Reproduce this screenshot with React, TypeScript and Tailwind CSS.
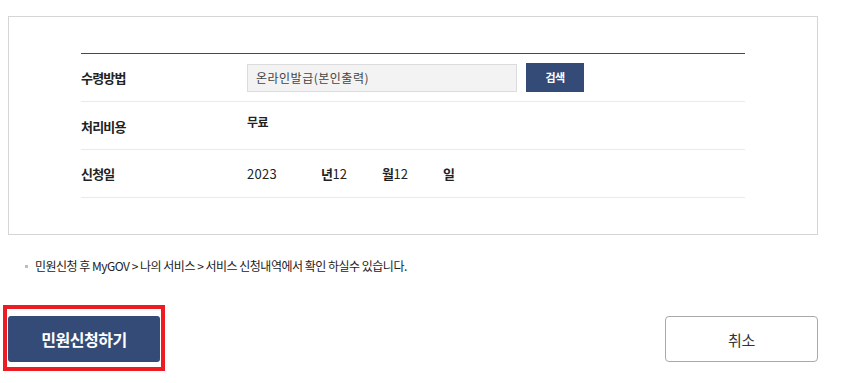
import React from "react";

const App = () => {
    return (
        <div className="relative w-[842px] h-[383px] bg-white text-[#222] font-['Noto_Sans_CJK_KR','Noto_Sans',sans-serif] pt-[16px]">
            {/* 신청 정보 박스 */}
            <div className="ml-[8px] w-[810px] h-[219px] border border-[#d5d5d5] pt-[36px] px-[72px]">
                <div className="w-[664px] border-t border-[#344b78]">
                    <div className="flex items-center h-[48px] border-b border-[#eaeaea]">
                        <div className="w-[166px] text-[13px] font-bold tracking-[-0.8px] leading-none">수령방법</div>
                        <div className="w-[270px] h-[28px] bg-[#f3f3f3] border border-[#dcdcdc] flex items-center pl-[8px] text-[12px] tracking-[0.5px] text-[#444] leading-none">
                            온라인발급(본인출력)
                        </div>
                        <button className="ml-[9px] w-[58px] h-[29px] bg-[#344b78] text-white text-[11px] font-bold tracking-[-0.6px] leading-none">
                            검색
                        </button>
                    </div>
                    <div className="flex items-center h-[48px] border-b border-[#eaeaea]">
                        <div className="w-[166px] text-[13px] font-bold tracking-[-0.8px] leading-none mt-[1px]">처리비용</div>
                        <div className="text-[12px] font-bold tracking-[-0.6px] leading-none mb-[7px]">무료</div>
                    </div>
                    <div className="flex items-center h-[48px] border-b border-[#eaeaea] text-[13px] leading-none">
                        <div className="w-[166px] font-bold tracking-[-0.8px]">신청일</div>
                        <span className="w-[74px] tracking-[0.3px]">2023</span>
                        <span className="w-[61px]"><b className="tracking-[-0.5px]">년</b>12</span>
                        <span className="w-[61px]"><b className="tracking-[-0.5px]">월</b>12</span>
                        <b>일</b>
                    </div>
                </div>
            </div>

            {/* 안내 문구 */}
            <div className="flex items-center mt-[24px] ml-[25px] h-[14px]">
                <span className="w-[3px] h-[3px] bg-[#bdbdbd] mr-[7px]"></span>
                <p className="text-[12px] tracking-[-0.5px] leading-none text-[#222]">
                    민원신청 후 MyGOV &gt; 나의 서비스 &gt; 서비스 신청내역에서 확인 하실수 있습니다.
                </p>
            </div>

            {/* 버튼 */}
            <div className="flex justify-between mt-[43px] ml-[8px] w-[810px]">
                <button className="w-[152px] h-[46px] rounded-[3px] bg-[#344b78] text-white text-[16px] font-bold tracking-[-0.5px] leading-none">
                    민원신청하기
                </button>
                <button className="w-[153px] h-[46px] rounded-[4px] bg-white border border-[#a9a9a9] text-[#333] text-[15px] tracking-[-0.3px] leading-none">
                    취소
                </button>
            </div>

            {/* 강조 표시 */}
            <div className="absolute left-[3px] top-[305px] w-[162px] h-[66px] border-4 border-[#ed1c24]"></div>
        </div>
    );
};

export default App;
